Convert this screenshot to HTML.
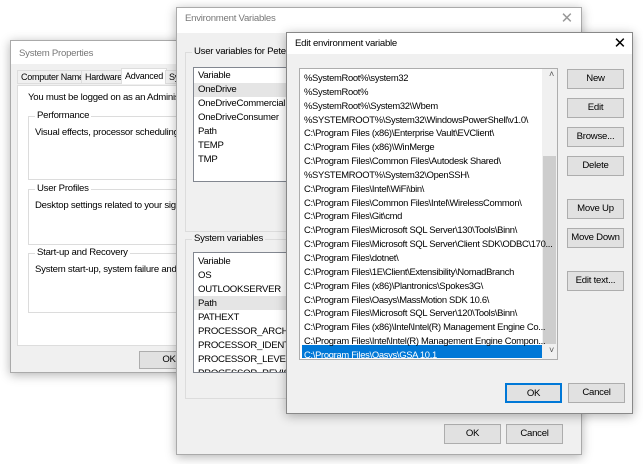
<!DOCTYPE html>
<html><head><style>
*{box-sizing:border-box;margin:0;padding:0}
body{width:643px;height:464px;background:#fff;position:relative;overflow:hidden;font-family:"Liberation Sans",sans-serif;font-size:9.6px;letter-spacing:-0.25px;color:#000}
.abs{position:absolute}
.win{position:absolute;background:#f0f0f0;border:1px solid #aaa;box-shadow:0 2px 10px rgba(0,0,0,.3)}
.tb{position:absolute;left:0;right:0;top:0;background:#fff;color:#777;padding-left:8px}
.btn{position:absolute;background:#e1e1e1;border:1px solid #adadad;text-align:center;white-space:nowrap}
.list{position:absolute;background:#fff;border:1px solid #828790;overflow:hidden}
.row{position:absolute;left:4px;white-space:nowrap}
.grp{position:absolute;border:1px solid #dcdcdc}
.grp span{position:absolute;top:-7px;left:6px;background:inherit;padding:0 2px}
</style></head><body>

<!-- System Properties -->
<div class="win" style="left:10px;top:40px;width:200px;height:333px">
 <div class="tb" style="height:23px;line-height:25px">System Properties</div>
 <div class="abs" style="left:6px;top:29px;width:300px;height:13px;">
  <span class="abs" style="left:0;top:0;border:1px solid #ddd;background:#f0f0f0;padding:1px 3px;font-size:9px">Computer Name</span>
  <span class="abs" style="left:64px;top:0;border:1px solid #ddd;background:#f0f0f0;padding:1px 3px;font-size:9px">Hardware</span>
  <span class="abs" style="left:104px;top:-2px;border:1px solid #ddd;border-bottom:none;background:#fff;padding:2px 3px;font-size:9px;height:16px">Advanced</span>
  <span class="abs" style="left:148px;top:0;border:1px solid #ddd;background:#f0f0f0;padding:1px 3px;font-size:9px">Sy</span>
 </div>
 <div class="abs" style="left:6px;top:44px;width:300px;height:261px;background:#fff;border:1px solid #ddd">
  <div class="abs" style="left:10px;top:6px;white-space:nowrap">You must be logged on as an Administrator to</div>
  <div class="grp" style="left:10px;top:30px;width:300px;height:64px;background:#fff"><span>Performance</span><div class="abs" style="left:6px;top:10px;white-space:nowrap">Visual effects, processor scheduling, memory</div></div>
  <div class="grp" style="left:10px;top:103px;width:300px;height:56px;background:#fff"><span>User Profiles</span><div class="abs" style="left:6px;top:10px;white-space:nowrap">Desktop settings related to your sign-in</div></div>
  <div class="grp" style="left:10px;top:167px;width:300px;height:60px;background:#fff"><span>Start-up and Recovery</span><div class="abs" style="left:6px;top:10px;white-space:nowrap">System start-up, system failure and debugging</div></div>
 </div>
 <div class="btn" style="left:128px;top:310px;width:60px;height:18px;line-height:16px">OK</div>
</div>

<!-- Environment Variables -->
<div class="win" style="left:176px;top:7px;width:406px;height:448px">
 <div class="tb" style="height:25px;line-height:22px">Environment Variables<span class="abs" style="right:8px;top:0;font-size:15px;color:#999">✕</span></div>
 <div class="grp" style="left:8px;top:44px;width:400px;height:180px"><span style="background:#f0f0f0;color:#000">User variables for Peter.D</span></div>
 <div class="list" style="left:16px;top:59px;width:200px;height:115px">
  <div class="abs" style="left:0;top:15px;width:200px;height:14px;background:#e5e5e5"></div>
  <div class="row" style="top:2px">Variable</div>
  <div class="row" style="top:16px">OneDrive</div>
  <div class="row" style="top:30px">OneDriveCommercial</div>
  <div class="row" style="top:44px">OneDriveConsumer</div>
  <div class="row" style="top:58px">Path</div>
  <div class="row" style="top:72px">TEMP</div>
  <div class="row" style="top:86px">TMP</div>
 </div>
 <div class="grp" style="left:8px;top:231px;width:400px;height:160px"><span style="background:#f0f0f0;color:#000">System variables</span></div>
 <div class="list" style="left:16px;top:244px;width:200px;height:121px">
  <div class="abs" style="left:0;top:43px;width:200px;height:14px;background:#e5e5e5"></div>
  <div class="row" style="top:3px">Variable</div>
  <div class="row" style="top:17px">OS</div>
  <div class="row" style="top:31px">OUTLOOKSERVER</div>
  <div class="row" style="top:45px">Path</div>
  <div class="row" style="top:59px">PATHEXT</div>
  <div class="row" style="top:73px">PROCESSOR_ARCHITECTURE</div>
  <div class="row" style="top:87px">PROCESSOR_IDENTIFIER</div>
  <div class="row" style="top:101px">PROCESSOR_LEVEL</div>
  <div class="row" style="top:115px">PROCESSOR_REVISION</div>
 </div>
 <div class="btn" style="left:267px;top:416px;width:57px;height:20px;line-height:18px">OK</div>
 <div class="btn" style="left:329px;top:416px;width:57px;height:20px;line-height:18px">Cancel</div>
</div>

<!-- Edit environment variable -->
<div class="win" style="left:286px;top:32px;width:347px;height:382px;border-color:#888">
 <div class="tb" style="height:21px;line-height:21px;color:#000">Edit environment variable<span class="abs" style="right:6px;top:0;font-size:15px;color:#000">✕</span></div>
 <div class="list" style="left:12px;top:35px;width:259px;height:292px;border-color:#adadad">
  <div class="abs" style="right:0;top:0;width:15px;height:290px;background:#f0f0f0"></div>
  <div class="abs" style="right:1px;top:87px;width:13px;height:188px;background:#cdcdcd"></div>
  <div class="abs" style="right:3px;top:0;font-size:9px;color:#555">˄</div>
  <div class="abs" style="right:3px;top:276px;font-size:9px;color:#555">˅</div>
  <div class="abs" style="left:2px;top:276px;width:240px;height:13px;background:#0078d7"></div>
  <div style="position:absolute;left:0;top:2px;font-size:9.4px;letter-spacing:-0.3px;line-height:13.85px;padding-left:4px;white-space:nowrap">
   %SystemRoot%\system32<br>%SystemRoot%<br>%SystemRoot%\System32\Wbem<br>%SYSTEMROOT%\System32\WindowsPowerShell\v1.0\<br>C:\Program Files (x86)\Enterprise Vault\EVClient\<br>C:\Program Files (x86)\WinMerge<br>C:\Program Files\Common Files\Autodesk Shared\<br>%SYSTEMROOT%\System32\OpenSSH\<br>C:\Program Files\Intel\WiFi\bin\<br>C:\Program Files\Common Files\Intel\WirelessCommon\<br>C:\Program Files\Git\cmd<br>C:\Program Files\Microsoft SQL Server\130\Tools\Binn\<br>C:\Program Files\Microsoft SQL Server\Client SDK\ODBC\170...<br>C:\Program Files\dotnet\<br>C:\Program Files\1E\Client\Extensibility\NomadBranch<br>C:\Program Files (x86)\Plantronics\Spokes3G\<br>C:\Program Files\Oasys\MassMotion SDK 10.6\<br>C:\Program Files\Microsoft SQL Server\120\Tools\Binn\<br>C:\Program Files (x86)\Intel\Intel(R) Management Engine Co...<br>C:\Program Files\Intel\Intel(R) Management Engine Compon...<br><span style="color:#fff">C:\Program Files\Oasys\GSA 10.1</span>
  </div>
 </div>
 <div class="btn" style="left:280px;top:36px;width:57px;height:20px;line-height:18px">New</div>
 <div class="btn" style="left:280px;top:65px;width:57px;height:20px;line-height:18px">Edit</div>
 <div class="btn" style="left:280px;top:94px;width:57px;height:20px;line-height:18px">Browse...</div>
 <div class="btn" style="left:280px;top:123px;width:57px;height:20px;line-height:18px">Delete</div>
 <div class="btn" style="left:280px;top:166px;width:57px;height:20px;line-height:18px">Move Up</div>
 <div class="btn" style="left:280px;top:195px;width:57px;height:20px;line-height:18px">Move Down</div>
 <div class="btn" style="left:280px;top:238px;width:57px;height:20px;line-height:18px">Edit text...</div>
 <div class="btn" style="left:218px;top:350px;width:57px;height:20px;line-height:17px;border:2px solid #0078d7">OK</div>
 <div class="btn" style="left:281px;top:350px;width:57px;height:20px;line-height:18px">Cancel</div>
</div>
</body></html>
